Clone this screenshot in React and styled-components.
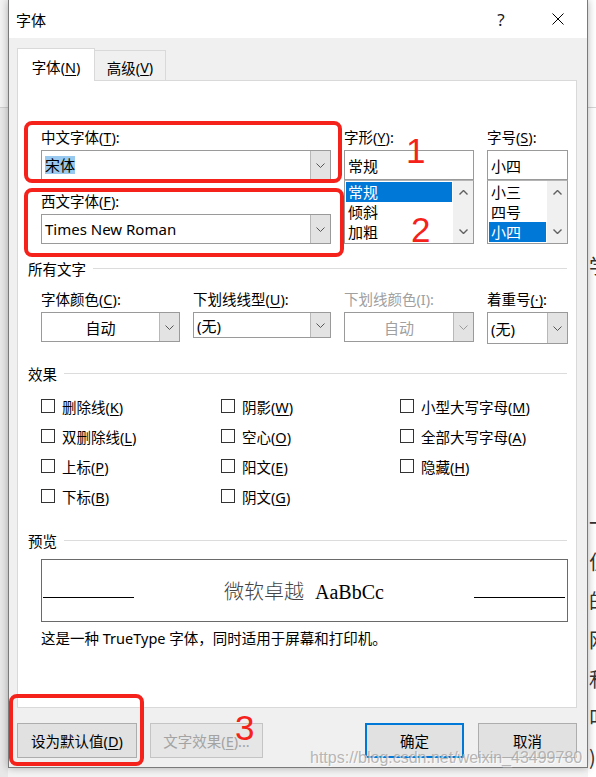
import React from 'react';
import styled, { createGlobalStyle, css } from 'styled-components';

const UI_FONT = `"Noto Sans", "Noto Sans CJK SC", sans-serif`;
const MARK_RED = '#f5221b';

const GlobalStyle = createGlobalStyle`
  html, body {
    margin: 0;
    padding: 0;
  }
  body {
    font-family: ${UI_FONT};
    background: #f7f7f7;
    color: #000;
  }
  * {
    box-sizing: border-box;
  }
`;

const Screen = styled.div`
  position: relative;
  display: flex;
  width: 596px;
  height: 777px;
  overflow: hidden;
  background: #f4f4f4;
`;

const LeftStrip = styled.div`
  width: 8px;
  flex: none;
  background: linear-gradient(#f3f3f3 0 107px, #cfcfcf 107px 108px, #e8e8e8 108px);
`;

const DocStrip = styled.div`
  flex: 1;
  overflow: hidden;
  background: linear-gradient(#fff 0 107px, #d6d6d6 107px 108px, #fff 108px);
  font-family: "Noto Sans CJK SC", sans-serif;
  font-size: 20px;
  color: #333;
`;

const DocLine = styled.div`
  height: 39px;
  line-height: 39px;
  margin-top: ${({ $gap }) => $gap || 0}px;
  padding-left: 1px;
  white-space: nowrap;
`;

const Dialog = styled.div`
  position: relative;
  z-index: 1;
  width: 580px;
  height: 768px;
  flex: none;
  display: flex;
  flex-direction: column;
  background: #f0f0f0;
  border: 1px solid #7a7a7a;
  border-top: none;
  box-shadow: 0 0 8px rgba(0, 0, 0, 0.3);
`;

const TitleBar = styled.div`
  height: 38px;
  flex: none;
  display: flex;
  align-items: center;
  padding: 0 23px 0 7px;
  background: #fff;
  font-size: 15px;
`;

const Title = styled.div`
  flex: 1;
`;

const HelpGlyph = styled.div`
  width: 20px;
  text-align: center;
  font-size: 17px;
  color: #1a1a1a;
  margin-right: 41px;
`;

const Body = styled.div`
  flex: 1;
  display: flex;
  flex-direction: column;
  padding: 10px 10px 0 8px;
`;

const TabStrip = styled.div`
  display: flex;
  align-items: flex-end;
  height: 32px;
`;

const Tab = styled.div`
  display: flex;
  align-items: center;
  justify-content: center;
  padding-top: 3px;
  font-size: 14.5px;
  border: 1px solid #d9d9d9;
  border-bottom: none;
  ${({ $active }) =>
    $active
      ? css`
          position: relative;
          z-index: 1;
          width: 78px;
          height: 33px;
          margin-bottom: -1px;
          background: #fff;
        `
      : css`
          width: 72px;
          height: 30px;
          margin-left: -1px;
          background: #f0f0f0;
        `}
`;

const Panel = styled.div`
  height: 628px;
  background: #fff;
  border: 1px solid #d9d9d9;
  padding: 46px 8px 0 10px;
`;

const Indent = styled.div`
  margin-left: 13px;
`;

const TopGrid = styled(Indent)`
  display: grid;
  grid-template-columns: 290px 130px 1fr;
  column-gap: 13px;
  align-items: start;
`;

const FieldGroup = styled.div`
  margin-top: ${({ $mt }) => $mt || 0}px;
`;

const FieldLabel = styled.div`
  height: 20px;
  line-height: 20px;
  margin-bottom: 3px;
  font-size: 14.5px;
  white-space: nowrap;
  color: ${({ $disabled }) => ($disabled ? '#a0a0a0' : '#000')};
`;

const Key = styled.span`
  text-decoration: underline;
  text-underline-offset: 2px;
  text-decoration-thickness: 1px;
`;

const Combo = styled.div`
  display: flex;
  height: ${({ $h }) => $h || 30}px;
  border: 1px solid #9a9a9a;
  background: #fff;
  font-size: 15px;
  color: ${({ $disabled }) => ($disabled ? '#a0a0a0' : '#000')};
`;

const ComboValue = styled.div`
  flex: 1;
  display: flex;
  align-items: center;
  justify-content: ${({ $center }) => ($center ? 'center' : 'flex-start')};
  padding-left: ${({ $center }) => ($center ? 0 : 3)}px;
  white-space: nowrap;
  overflow: hidden;
`;

const Selection = styled.span`
  background: #99c9ef;
  line-height: 18px;
`;

const DropButton = styled.div`
  width: 20px;
  flex: none;
  display: flex;
  align-items: center;
  justify-content: center;
  background: #e3e3e3;
  border-left: 1px solid #b8b8b8;
`;

const TextBox = styled.div`
  height: 30px;
  display: flex;
  align-items: center;
  padding-left: 3px;
  border: 1px solid #9a9a9a;
  background: #fff;
  font-size: 15px;
`;

const ListBox = styled.div`
  display: flex;
  height: 64px;
  border: 1px solid #9a9a9a;
  border-top-color: #b4b4b4;
  background: #fff;
`;

const ListItems = styled.div`
  flex: 1;
  padding: 1px;
`;

const ListItem = styled.div`
  height: 20px;
  line-height: 20px;
  padding-left: 2px;
  font-size: 15px;
  ${({ $selected }) =>
    $selected &&
    css`
      background: #0078d7;
      color: #fff;
    `}
`;

const ScrollTrack = styled.div`
  width: 20px;
  flex: none;
  display: flex;
  flex-direction: column;
  justify-content: space-between;
  align-items: center;
  padding: 9px 0;
  background: #f0f0f0;
`;

const SectionHead = styled.div`
  display: flex;
  align-items: center;
  height: 20px;
  margin-top: ${({ $mt }) => $mt}px;
  font-size: 14.5px;
  white-space: nowrap;

  &::after {
    content: '';
    flex: 1;
    height: 1px;
    margin-left: 7px;
    margin-right: 1px;
    background: #dcdcdc;
  }
`;

const AllTextGrid = styled(Indent)`
  display: grid;
  grid-template-columns: 139px 138px 130px 1fr;
  column-gap: 13px;
  align-items: start;
  margin-top: 11px;
`;

const EffectsGrid = styled(Indent)`
  display: grid;
  grid-template-columns: 180px 179px 1fr;
  grid-auto-rows: 30px;
  align-items: center;
  margin-top: 8px;
`;

const CheckItem = styled.label`
  display: flex;
  align-items: center;
  gap: 7px;
  font-size: 14.5px;
  white-space: nowrap;
`;

const CheckBox = styled.span`
  width: 14px;
  height: 14px;
  flex: none;
  border: 1px solid #333;
  background: #fff;
`;

const PreviewBox = styled(Indent)`
  display: flex;
  align-items: center;
  height: 63px;
  margin-top: 9px;
  padding: 0 2px 0 1px;
  border: 1px solid #6a6a6a;
`;

const Rule = styled.div`
  width: 91px;
  height: 1px;
  margin-top: 14px;
  background: #000;
`;

const Sample = styled.div`
  flex: 1;
  text-align: center;
  font-size: 20px;
  white-space: nowrap;
`;

const SampleCjk = styled.span`
  font-family: "Noto Sans CJK SC", sans-serif;
  font-weight: 300;
  color: #444;
`;

const SampleLatin = styled.span`
  margin-left: 11px;
  font-family: "Liberation Serif", serif;
`;

const Description = styled(Indent)`
  height: 20px;
  line-height: 20px;
  margin-top: 6px;
  font-size: 14.5px;
  white-space: nowrap;
`;

const ButtonRow = styled.div`
  display: flex;
  justify-content: space-between;
  margin-top: 15px;
`;

const ButtonGroup = styled.div`
  display: flex;
  gap: ${({ $gap }) => $gap}px;
`;

const Button = styled.button`
  width: ${({ $w }) => $w}px;
  height: 35px;
  padding: 0;
  font-family: ${UI_FONT};
  font-size: 14.5px;
  color: #000;
  background: #e1e1e1;
  border: 1px solid #adadad;
  ${({ $primary }) =>
    $primary &&
    css`
      border: 2px solid #0078d7;
    `}
  &:disabled {
    color: #a3a3a3;
    background: #e6e6e6;
    border-color: #c4c4c4;
  }
`;

/* hand-drawn markup layered over the dialog */
const Overlay = styled.div`
  position: absolute;
  inset: 0;
  z-index: 5;
  pointer-events: none;
`;

const Ring = styled.div`
  position: absolute;
  left: ${({ $x }) => $x}px;
  top: ${({ $y }) => $y}px;
  width: ${({ $w }) => $w}px;
  height: ${({ $h }) => $h}px;
  border: 4px solid ${MARK_RED};
  border-radius: 8px;
`;

const Numeral = styled.div`
  position: absolute;
  left: ${({ $x }) => $x}px;
  top: ${({ $y }) => $y}px;
  font-family: "Liberation Sans", sans-serif;
  font-size: 35px;
  line-height: 1;
  color: ${MARK_RED};
`;

const Watermark = styled.div`
  position: absolute;
  left: 310px;
  top: 748px;
  font-family: "Liberation Sans", sans-serif;
  font-size: 16px;
  line-height: 20px;
  color: rgba(165, 165, 165, 0.8);
  text-shadow: 1px 1px 0 rgba(255, 255, 255, 0.7);
  white-space: nowrap;
`;

const Chevron = ({ up, color = '#555', weight = 1 }) => (
  <svg width="9" height="5" viewBox="0 0 9 5">
    <polyline
      points={up ? '0.5,4.5 4.5,0.5 8.5,4.5' : '0.5,0.5 4.5,4.5 8.5,0.5'}
      fill="none"
      stroke={color}
      strokeWidth={weight}
    />
  </svg>
);

const CloseIcon = () => (
  <svg width="12" height="12" viewBox="0 0 12 12">
    <path d="M0.5 0.5 L11.5 11.5 M11.5 0.5 L0.5 11.5" stroke="#000" strokeWidth="1" />
  </svg>
);

const Mn = ({ text, k, tail = '' }) => (
  <>
    {text}(<Key>{k}</Key>){tail}
  </>
);

const DropCombo = ({ children, center, disabled, h }) => (
  <Combo $h={h} $disabled={disabled}>
    <ComboValue $center={center}>{children}</ComboValue>
    <DropButton>
      <Chevron color={disabled ? '#9a9a9a' : '#555'} />
    </DropButton>
  </Combo>
);

const PickList = ({ items, selected }) => (
  <ListBox>
    <ListItems>
      {items.map((item) => (
        <ListItem key={item} $selected={item === selected}>
          {item}
        </ListItem>
      ))}
    </ListItems>
    <ScrollTrack>
      <Chevron up color="#606060" weight={1.4} />
      <Chevron color="#606060" weight={1.4} />
    </ScrollTrack>
  </ListBox>
);

const effects = [
  ['删除线', 'K'],
  ['阴影', 'W'],
  ['小型大写字母', 'M'],
  ['双删除线', 'L'],
  ['空心', 'O'],
  ['全部大写字母', 'A'],
  ['上标', 'P'],
  ['阳文', 'E'],
  ['隐藏', 'H'],
  ['下标', 'B'],
  ['阴文', 'G'],
];

const docLines = [
  { ch: '学', gap: 246 },
  { ch: '一', gap: 218 },
  { ch: '位' },
  { ch: '的' },
  { ch: '网' },
  { ch: '和' },
  { ch: '叫' },
  { ch: ')' },
];

const App = () => (
  <>
    <GlobalStyle />
    <Screen>
      <LeftStrip />
      <Dialog>
        <TitleBar>
          <Title>字体</Title>
          <HelpGlyph>?</HelpGlyph>
          <CloseIcon />
        </TitleBar>
        <Body>
          <TabStrip>
            <Tab $active>
              <Mn text="字体" k="N" />
            </Tab>
            <Tab>
              <Mn text="高级" k="V" />
            </Tab>
          </TabStrip>
          <Panel>
            <TopGrid>
              <div>
                <FieldGroup>
                  <FieldLabel>
                    <Mn text="中文字体" k="T" tail=":" />
                  </FieldLabel>
                  <DropCombo>
                    <Selection>宋体</Selection>
                  </DropCombo>
                </FieldGroup>
                <FieldGroup $mt={11}>
                  <FieldLabel>
                    <Mn text="西文字体" k="F" tail=":" />
                  </FieldLabel>
                  <DropCombo>Times New Roman</DropCombo>
                </FieldGroup>
              </div>
              <div>
                <FieldLabel>
                  <Mn text="字形" k="Y" tail=":" />
                </FieldLabel>
                <TextBox>常规</TextBox>
                <PickList items={['常规', '倾斜', '加粗']} selected="常规" />
              </div>
              <div>
                <FieldLabel>
                  <Mn text="字号" k="S" tail=":" />
                </FieldLabel>
                <TextBox>小四</TextBox>
                <PickList items={['小三', '四号', '小四']} selected="小四" />
              </div>
            </TopGrid>

            <SectionHead $mt={14}>所有文字</SectionHead>
            <AllTextGrid>
              <div>
                <FieldLabel>
                  <Mn text="字体颜色" k="C" tail=":" />
                </FieldLabel>
                <DropCombo center>自动</DropCombo>
              </div>
              <div>
                <FieldLabel>
                  <Mn text="下划线线型" k="U" tail=":" />
                </FieldLabel>
                <DropCombo h={26}>(无)</DropCombo>
              </div>
              <div>
                <FieldLabel $disabled>下划线颜色(I):</FieldLabel>
                <DropCombo center disabled>
                  自动
                </DropCombo>
              </div>
              <div>
                <FieldLabel>
                  着重号<Key>(·)</Key>:
                </FieldLabel>
                <DropCombo h={32}>(无)</DropCombo>
              </div>
            </AllTextGrid>

            <SectionHead $mt={19}>效果</SectionHead>
            <EffectsGrid>
              {effects.map(([text, k]) => (
                <CheckItem key={text}>
                  <CheckBox />
                  <span>
                    <Mn text={text} k={k} />
                  </span>
                </CheckItem>
              ))}
            </EffectsGrid>

            <SectionHead $mt={19}>预览</SectionHead>
            <PreviewBox>
              <Rule />
              <Sample>
                <SampleCjk>微软卓越</SampleCjk>
                <SampleLatin>AaBbCc</SampleLatin>
              </Sample>
              <Rule />
            </PreviewBox>
            <Description>这是一种 TrueType 字体，同时适用于屏幕和打印机。</Description>
          </Panel>

          <ButtonRow>
            <ButtonGroup $gap={13}>
              <Button $w={120}>
                <Mn text="设为默认值" k="D" />
              </Button>
              <Button $w={113} disabled>
                <Mn text="文字效果" k="E" tail="..." />
              </Button>
            </ButtonGroup>
            <ButtonGroup $gap={14}>
              <Button $w={99} $primary>
                确定
              </Button>
              <Button $w={99}>取消</Button>
            </ButtonGroup>
          </ButtonRow>
        </Body>
      </Dialog>
      <DocStrip>
        {docLines.map(({ ch, gap }, i) => (
          <DocLine key={i} $gap={gap}>
            {ch}
          </DocLine>
        ))}
      </DocStrip>

      <Overlay>
        <Ring $x={24} $y={121} $w={318} $h={62} />
        <Ring $x={24} $y={188} $w={320} $h={69} />
        <Ring $x={9} $y={694} $w={135} $h={72} />
        <Numeral $x={406} $y={133}>1</Numeral>
        <Numeral $x={411} $y={212}>2</Numeral>
        <Numeral $x={235} $y={710}>3</Numeral>
        <Watermark>https://blog.csdn.net/weixin_43499780</Watermark>
      </Overlay>
    </Screen>
  </>
);

export default App;
